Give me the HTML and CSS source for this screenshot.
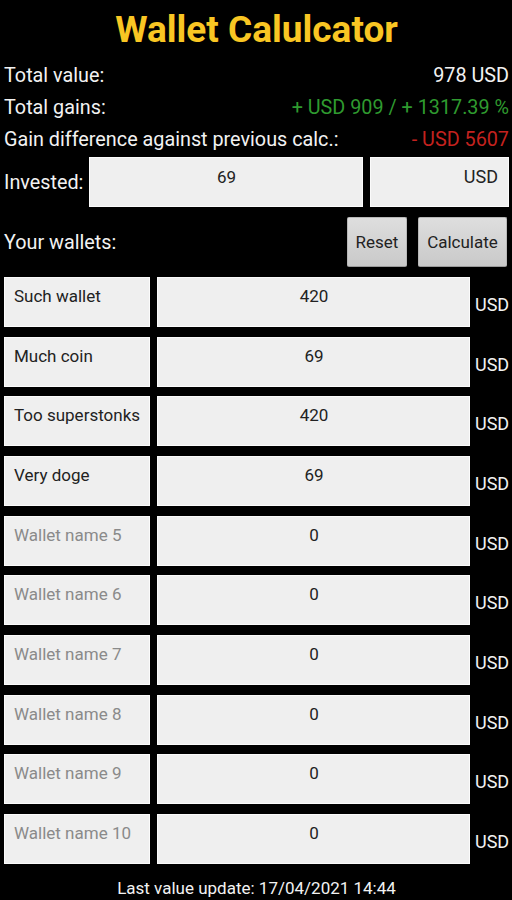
FILE: index.html
```html
<!DOCTYPE html>
<html>
<head>
<meta charset="utf-8">
<link rel="stylesheet" href="styles.css">
</head>
<body>
<div class="app">
  <h1 class="title">Wallet Calulcator</h1>
  <div class="stat"><span>Total value:</span><span>978 USD</span></div>
  <div class="stat"><span>Total gains:</span><span class="pos">+ USD 909 / + 1317.39 %</span></div>
  <div class="stat"><span>Gain difference against previous calc.:</span><span class="neg">- USD 5607</span></div>
  <div class="invested">
    <span class="label">Invested:</span>
    <div class="box center">69</div>
    <div class="box right cur-box">USD</div>
  </div>
  <div class="actions">
    <span class="label grow">Your wallets:</span>
    <button class="btn reset">Reset</button>
    <button class="btn calc">Calculate</button>
  </div>
  <div class="wallets">
    <div class="wallet"><div class="box name">Such wallet</div><div class="box center">420</div><span class="cur">USD</span></div>
    <div class="wallet"><div class="box name">Much coin</div><div class="box center">69</div><span class="cur">USD</span></div>
    <div class="wallet"><div class="box name">Too superstonks</div><div class="box center">420</div><span class="cur">USD</span></div>
    <div class="wallet"><div class="box name">Very doge</div><div class="box center">69</div><span class="cur">USD</span></div>
    <div class="wallet"><div class="box name ph">Wallet name 5</div><div class="box center">0</div><span class="cur">USD</span></div>
    <div class="wallet"><div class="box name ph">Wallet name 6</div><div class="box center">0</div><span class="cur">USD</span></div>
    <div class="wallet"><div class="box name ph">Wallet name 7</div><div class="box center">0</div><span class="cur">USD</span></div>
    <div class="wallet"><div class="box name ph">Wallet name 8</div><div class="box center">0</div><span class="cur">USD</span></div>
    <div class="wallet"><div class="box name ph">Wallet name 9</div><div class="box center">0</div><span class="cur">USD</span></div>
    <div class="wallet"><div class="box name ph">Wallet name 10</div><div class="box center">0</div><span class="cur">USD</span></div>
  </div>
  <div class="footer">Last value update: 17/04/2021 14:44</div>
</div>
</body>
</html>
```

FILE: styles.css
```css
html, body {
  margin: 0;
  padding: 0;
  background: #000;
}
body {
  font-family: Roboto, "Noto Sans", sans-serif;
  color: #f2f2f2;
  width: 512px;
  height: 900px;
  overflow: hidden;
}
.app {
  padding: 0 3px 0 4px;
}
.title {
  margin: 0;
  padding-top: 5px;
  height: 55px;
  line-height: 50px;
  font-size: 37px;
  font-weight: 700;
  text-align: center;
  color: #f9c623;
}
.stat {
  display: flex;
  justify-content: space-between;
  height: 32px;
  line-height: 32px;
  font-size: 19.8px;
}
.pos { color: #2f9a2f; }
.neg { color: #c4221f; }
.invested {
  margin-top: 1px;
  display: grid;
  grid-template-columns: 78px 274px 139px;
  column-gap: 7px;
  height: 50px;
  align-items: center;
}
.label {
  font-size: 19.8px;
}
.box {
  box-sizing: border-box;
  height: 50px;
  background: #efefef;
  border: 1px solid #fbfbfb;
  color: #222;
  font-size: 17px;
  padding: 8px 8px 0 9px;
  line-height: 20px;
  white-space: nowrap;
  overflow: hidden;
}
.center { text-align: center; }
.right { text-align: right; }
.invested .box { padding-top: 9px; }
.invested .cur-box { font-size: 18px; padding-right: 10px; }
.actions {
  margin-top: 10px;
  display: flex;
  align-items: center;
  gap: 11px;
  height: 50px;
  padding-right: 2px;
}
.grow { flex: 1; }
.btn {
  height: 50px;
  box-sizing: border-box;
  border: 1px solid #b8b8b8;
  border-bottom-color: #9a9a9a;
  border-radius: 2px;
  background: linear-gradient(#dedede, #c9c9c9);
  font-family: Roboto, "Noto Sans", sans-serif;
  font-size: 17px;
  color: #222;
  padding: 0;
}
.reset { width: 60px; }
.calc { width: 89px; }
.wallets {
  margin-top: 10px;
  display: flex;
  flex-direction: column;
  gap: 9.67px;
}
.wallet {
  display: grid;
  grid-template-columns: 146px 313px auto;
  column-gap: 7px;
  height: 50px;
}
.wallet .cur {
  margin-left: -2px;
  font-size: 18px;
  padding-top: 17px;
  line-height: 22px;
}
.ph { color: #8a8a8a; }
.footer {
  text-align: center;
  font-size: 17px;
  margin-top: 12px;
  line-height: 24px;
}
```
